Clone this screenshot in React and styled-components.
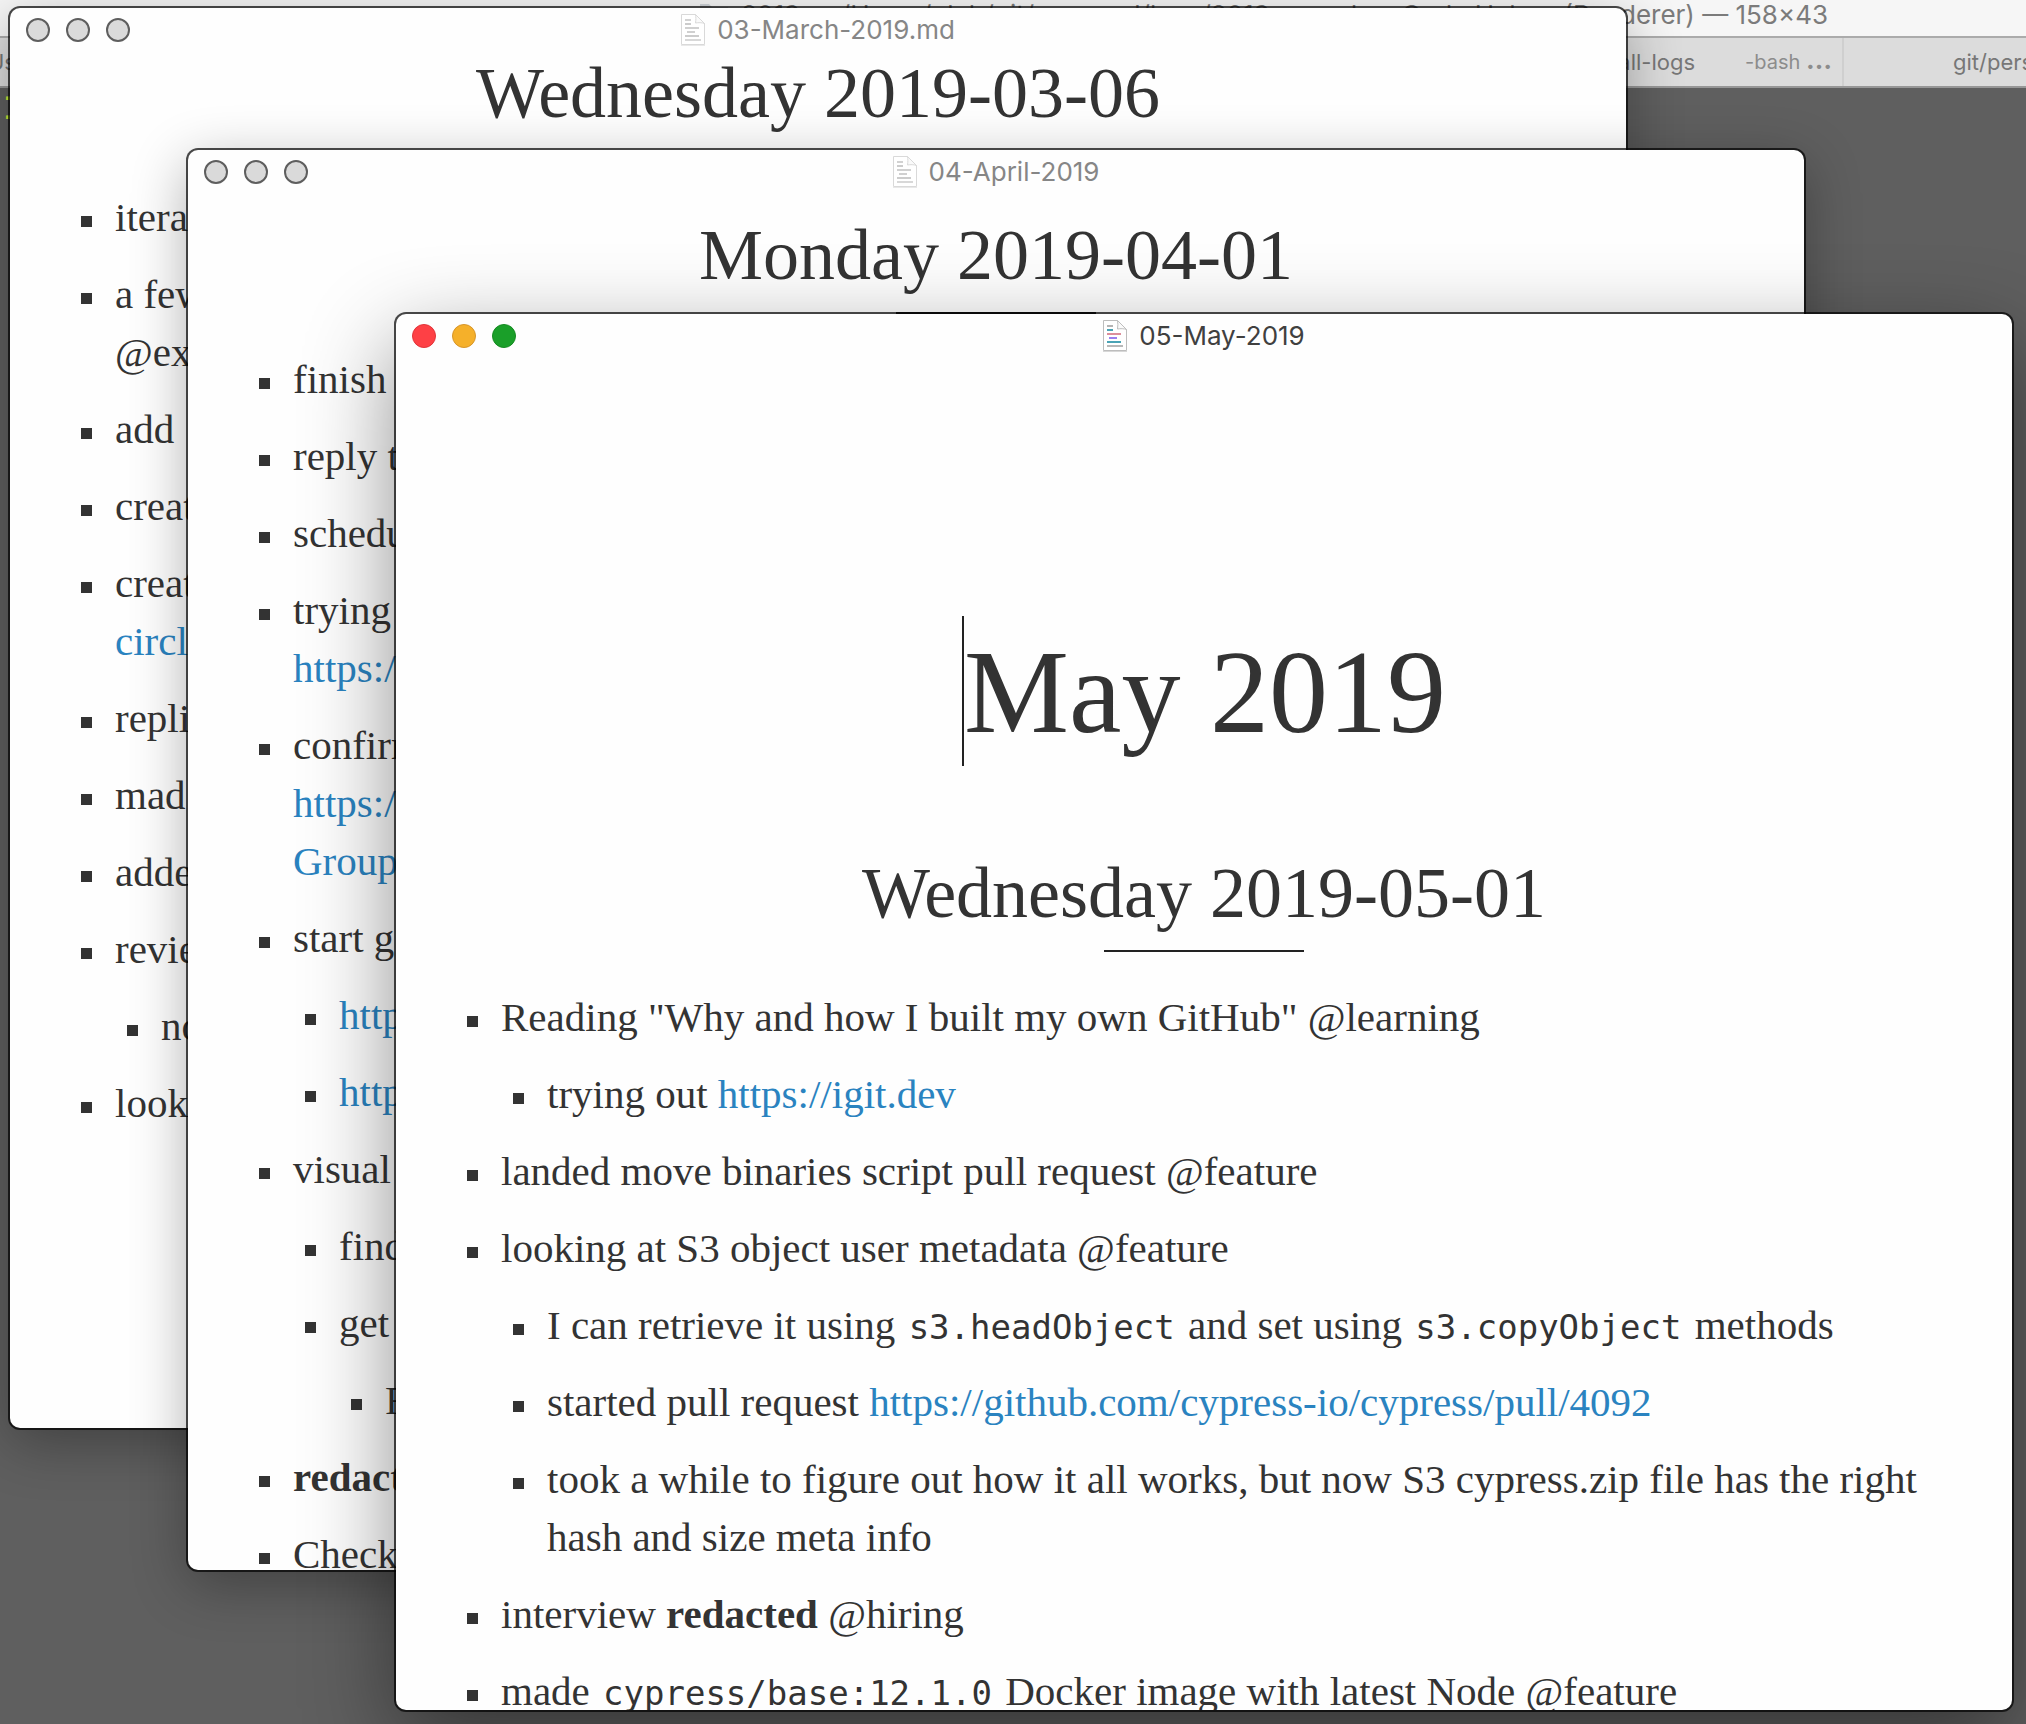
import React from "react";
import styled, { createGlobalStyle } from "styled-components";

const serif = `"Palatino", "Palatino Linotype", "Liberation Serif", serif`;
const sans = `"Inter", "Liberation Sans", sans-serif`;
const mono = `"DejaVu Sans Mono", monospace`;

const GlobalStyle = createGlobalStyle`
  *, *::before, *::after { box-sizing: border-box; }
  body { margin: 0; background: #5f5f5f; }
`;

const Desktop = styled.main`
  position: relative;
  min-height: 100vh;
  overflow: hidden;
  background: #5f5f5f;
  font-family: ${sans};
`;

const Terminal = styled.section`
  position: absolute;
  inset: 0 0 0 -12px;
`;

const TerminalTitle = styled.header`
  display: flex;
  align-items: center;
  justify-content: flex-end;
  gap: 12px;
  height: 38px;
  padding: 0 198px 6px 0;
  border-bottom: 2px solid #ababab;
  background: #f6f6f6;
  color: #7b7b7b;
  font-size: 26px;
  line-height: 30px;
  white-space: nowrap;
`;

const Tabs = styled.nav`
  display: flex;
  height: 50px;
  border-bottom: 2px solid #979797;
  background: #dcdcdc;
  overflow: hidden;
`;

const Tab = styled.button`
  display: flex;
  flex: ${(p) => (p.$width ? `0 0 ${p.$width}px` : "1 1 0")};
  align-items: center;
  gap: 50px;
  min-width: 0;
  padding: ${(p) => p.$pad};
  border: 0;
  background: none;
  color: #777;
  font: 22px/28px ${sans};
  white-space: nowrap;

  & + & {
    border-left: 2px solid #cfcfcf;
  }
`;

const TabPath = styled.span`
  margin-right: auto;
`;

const Process = styled.span`
  color: #8c8c8c;
  font-size: 20px;
`;

const Busy = styled.b`
  font-size: 26px;
  line-height: 24px;
`;

const Output = styled.pre`
  margin: 0;
  color: #c8e83a;
  font: bold 24px/19px ${mono};
`;

const Frame = styled.section`
  position: absolute;
  top: ${(p) => p.$top}px;
  left: ${(p) => p.$left}px;
  right: ${(p) => p.$right}px;
  bottom: ${(p) => p.$bottom}px;
  display: flex;
  flex-direction: column;
  overflow: hidden;
  border-radius: 10px;
  background: #fefefe;
  box-shadow: 0 0 0 2px rgba(0, 0, 0, 0.7),
    ${(p) => (p.$active ? "0 30px 90px rgba(0, 0, 0, 0.45)" : "0 14px 56px rgba(0, 0, 0, 0.32)")};
`;

const TitleBar = styled.header`
  display: grid;
  grid-template-columns: 1fr auto 1fr;
  align-items: center;
  flex: none;
  height: 44px;
  padding: 0 16px;
`;

const Lights = styled.div`
  display: flex;
  gap: 16px;
`;

const Light = styled.button`
  width: 24px;
  height: 24px;
  padding: 0;
  border: ${(p) => p.$border};
  border-radius: 50%;
  background: ${(p) => p.$fill};
`;

const Title = styled.h1`
  display: flex;
  align-items: center;
  gap: 12px;
  margin: 0;
  color: ${(p) => (p.$active ? "#404040" : "#868686")};
  font-size: 26px;
  font-weight: 400;
  line-height: 32px;
`;

const Page = styled.article`
  flex: 1;
  min-height: 0;
  overflow: hidden;
  padding: ${(p) => p.$top}px 56px 0;
  color: #333;
  font-family: ${serif};
`;

const Month = styled.h2`
  display: flex;
  justify-content: center;
  margin: 0 0 87px;
  font-size: 118px;
  font-weight: 400;
  line-height: 146px;
`;

const MonthText = styled.span`
  padding-top: 4px;
  border-left: 2px solid #222;
`;

const Day = styled.h3`
  margin: 0;
  font-size: 72px;
  font-weight: 400;
  line-height: 80px;
  text-align: center;

  &::after {
    content: "";
    display: block;
    width: 200px;
    height: 2px;
    margin: 17px auto 36px;
    background: #222;
  }
`;

const List = styled.ul`
  display: grid;
  gap: 19px;
  margin: 0;
  padding: 0;
  list-style: none;
`;

const Entry = styled.li`
  display: grid;
  grid-template-columns: 11px minmax(0, 1fr);
  column-gap: 23px;
  row-gap: 19px;
  padding-left: ${(p) => (p.$nested ? 12 : 15)}px;
  font-size: 41px;
  line-height: 58px;

  &::before {
    content: "";
    width: 11px;
    height: 11px;
    margin-top: 28px;
    background: #333;
  }

  & > ul {
    grid-column: 2;
  }
`;

const Link = styled.a`
  color: #2a83c0;
  text-decoration: none;
`;

const Code = styled.code`
  padding: 0 3px;
  font: 34px/40px ${mono};
`;

function DocIcon({ active }) {
  const c = active
    ? ["#b4b4b4", "#4aa3b5", "#dc8f9c", "#9b80f0", "#4aa3b5", "#b8b8b8"]
    : ["#d2d2d2", "#cccccc", "#d0d0d0", "#d0d0d0", "#cccccc", "#d8d8d8"];
  const edge = active ? "#bdbdbd" : "#d9d9d9";
  return (
    <svg width="24" height="32" viewBox="0 0 24 32" aria-hidden="true">
      <path d="M.5 .5H14.500L23.500 9.500V30.500H.5Z" fill="#fff" stroke={edge} />
      <path d="M14.500 .5C15 3 15 6 14.500 9C17.500 8.500 21 8.500 23.500 9.500Z" fill="#fafafa" stroke={edge} />
      <path d="M0 31.500H24" stroke={edge} opacity=".6" />
      <path d="M4 6H10" stroke={c[0]} strokeWidth="2" />
      <path d="M4 10H10" stroke={c[1]} strokeWidth="2" />
      <path d="M4 14H18" stroke={c[2]} strokeWidth="2" />
      <path d="M6 18H14" stroke={c[3]} strokeWidth="2" />
      <path d="M4 22H18" stroke={c[4]} strokeWidth="2" />
      <path d="M4 26H20" stroke={c[5]} strokeWidth="2" />
    </svg>
  );
}

function FolderIcon() {
  return (
    <svg width="30" height="26" viewBox="0 0 30 26" aria-hidden="true">
      <path d="M1 2H10L13 5H29V25H1Z" fill="#cfd4d8" />
    </svg>
  );
}

const lights = [
  { label: "Close", fill: "#fe4045", border: "1px solid #e0343a" },
  { label: "Minimize", fill: "#f5b02a", border: "1px solid #d6952a" },
  { label: "Zoom", fill: "#1a9f29", border: "1px solid #168a22" },
];

function Window({ title, active, top, left, right, bottom, scroll, children }) {
  return (
    <Frame $top={top} $left={left} $right={right} $bottom={bottom} $active={active} aria-label={title}>
      <TitleBar>
        <Lights>
          {lights.map((l) => (
            <Light
              key={l.label}
              type="button"
              aria-label={l.label}
              $fill={active ? l.fill : "#dadada"}
              $border={active ? l.border : "2px solid #5e5e5e"}
            />
          ))}
        </Lights>
        <Title $active={active}>
          <DocIcon active={active} />
          {title}
        </Title>
      </TitleBar>
      <Page $top={scroll}>{children}</Page>
    </Frame>
  );
}

function Entries({ items, nested }) {
  return (
    <List>
      {items.map((item, i) => (
        <Entry key={i} $nested={nested}>
          <div>{item.text}</div>
          {item.items && <Entries items={item.items} nested />}
        </Entry>
      ))}
    </List>
  );
}

const march = [
  { text: "itera" },
  { text: <>a few<br />@exa</> },
  { text: "add" },
  { text: "creat" },
  { text: <>creat<br /><Link href="#circle">circle</Link></> },
  { text: "repli" },
  { text: "mad" },
  { text: "adde" },
  { text: "revie", items: [{ text: "no" }] },
  { text: "look" },
];

const april = [
  { text: "finish" },
  { text: "reply t" },
  { text: "schedu" },
  { text: <>trying<br /><Link href="#trying">https:/</Link></> },
  { text: <>confirm<br /><Link href="#confirm">https:/<br />Group</Link></> },
  {
    text: "start g",
    items: [
      { text: <Link href="#first">http</Link> },
      { text: <Link href="#second">http</Link> },
    ],
  },
  { text: "visual", items: [{ text: "find" }, { text: "get", items: [{ text: "F" }] }] },
  { text: <b>redact</b> },
  { text: "Check" },
];

const may = [
  {
    text: 'Reading "Why and how I built my own GitHub" @learning',
    items: [{ text: <>trying out <Link href="https://igit.dev">https://igit.dev</Link></> }],
  },
  { text: "landed move binaries script pull request @feature" },
  {
    text: "looking at S3 object user metadata @feature",
    items: [
      { text: <>I can retrieve it using <Code>s3.headObject</Code> and set using <Code>s3.copyObject</Code> methods</> },
      {
        text: (
          <>
            started pull request{" "}
            <Link href="https://github.com/cypress-io/cypress/pull/4092">
              https://github.com/cypress-io/cypress/pull/4092
            </Link>
          </>
        ),
      },
      { text: "took a while to figure out how it all works, but now S3 cypress.zip file has the right hash and size meta info" },
    ],
  },
  { text: <>interview <b>redacted</b> @hiring</> },
  { text: <>made <Code>cypress/base:12.1.0</Code> Docker image with latest Node @feature</> },
];

export default function App() {
  return (
    <>
      <GlobalStyle />
      <Desktop>
        <Terminal aria-label="Terminal">
          <TerminalTitle>
            <FolderIcon />
            <span>2019 — /Users/gleb/git/personal/logs/2019 — node • Code Helper (Renderer) — 158×43</span>
          </TerminalTitle>
          <Tabs>
            <Tab type="button" $pad="0 10px 0 0">
              <TabPath>Us</TabPath>
              <span>all-logs</span>
              <Process>
                -bash <Busy>…</Busy>
              </Process>
            </Tab>
            <Tab type="button" $width={184} $pad="0 0 0 109px">
              git/pers
            </Tab>
          </Tabs>
          <Output>{" -\n--"}</Output>
        </Terminal>

        <Window title="03-March-2019.md" top={8} left={10} right={400} bottom={296} scroll={1}>
          <Day>Wednesday 2019-03-06</Day>
          <Entries items={march} />
        </Window>
        <Window title="04-April-2019" top={150} left={188} right={222} bottom={154} scroll={21}>
          <Day>Monday 2019-04-01</Day>
          <Entries items={april} />
        </Window>
        <Window title="05-May-2019" active top={314} left={396} right={14} bottom={14} scroll={258}>
          <Month>
            <MonthText>May 2019</MonthText>
          </Month>
          <Day>Wednesday 2019-05-01</Day>
          <Entries items={may} />
        </Window>
      </Desktop>
    </>
  );
}
